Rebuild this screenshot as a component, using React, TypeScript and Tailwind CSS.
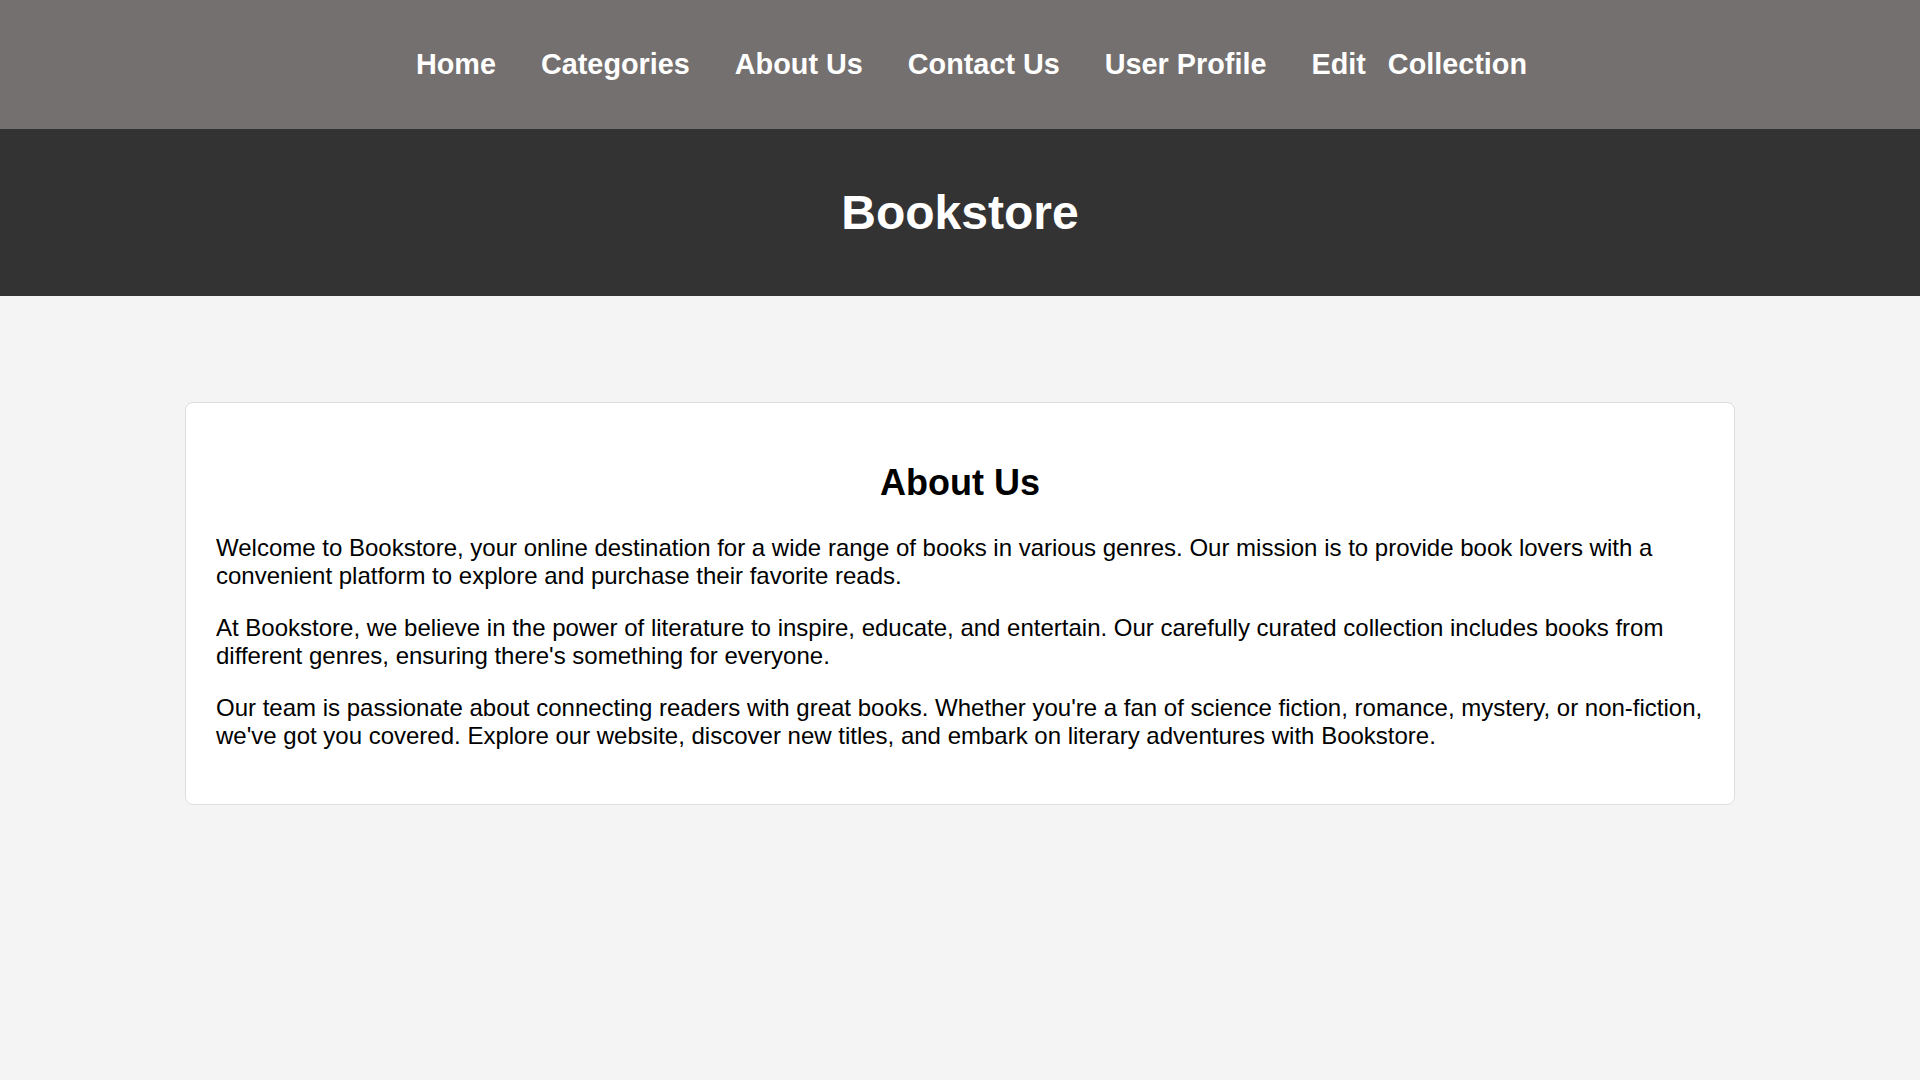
import React from "react";

const links = ["Home", "Categories", "About Us", "Contact Us", "User Profile"];

const paragraphs = [
  "Welcome to Bookstore, your online destination for a wide range of books in various genres. Our mission is to provide book lovers with a convenient platform to explore and purchase their favorite reads.",
  "At Bookstore, we believe in the power of literature to inspire, educate, and entertain. Our carefully curated collection includes books from different genres, ensuring there's something for everyone.",
  "Our team is passionate about connecting readers with great books. Whether you're a fan of science fiction, romance, mystery, or non-fiction, we've got you covered. Explore our website, discover new titles, and embark on literary adventures with Bookstore.",
];

const App = () => {
  return (
    <div className="min-h-screen bg-[#f4f4f4] font-['Liberation_Sans',Arial,sans-serif] text-black">
      <nav className="h-[129px] bg-[#747070] flex items-center justify-center pl-[23px]">
        <ul className="flex items-center gap-[45px] text-[28.8px] font-bold text-white leading-none">
          {links.map((l) => (
            <li key={l}>
              <a href="#">{l}</a>
            </li>
          ))}
          <li className="flex gap-[22px]">
            <a href="#">Edit</a>
            <a href="#">Collection</a>
          </li>
        </ul>
      </nav>

      <header className="h-[167px] bg-[#333333] flex items-center justify-center">
        <h1 className="text-[48px] font-bold text-white leading-none">Bookstore</h1>
      </header>

      <main className="pt-[106px] px-[185px] pb-10">
        <section className="bg-white border border-[#dddddd] rounded-lg px-[30px] pt-[30px] pb-[30px]">
          <h2 className="text-[36px] font-bold text-center leading-[41px] mt-[29px] mb-[31px]">
            About Us
          </h2>
          {paragraphs.map((p, i) => (
            <p key={i} className="text-[24px] leading-[28px] mb-6">
              {p}
            </p>
          ))}
        </section>
      </main>
    </div>
  );
};

export default App;
